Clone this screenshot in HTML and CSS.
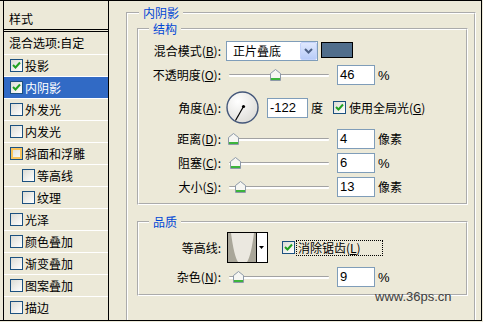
FILE: index.html
```html
<!DOCTYPE html>
<html lang="zh">
<head>
	<meta charset="UTF-8" />
	<title>图层样式 - 内阴影</title>
	<link rel="stylesheet" href="styles.css">
</head>
<body>
	<div class="dialog">
		<div class="styles">
			<div class="styles-head">样式</div>
			<div class="style-row plain">混合选项:自定</div>
			<div class="style-row"><span class="chk"><svg width="11" height="11"><polyline points="2,5 4.5,7.5 9,2.5" /></svg></span>投影</div>
			<div class="style-row selected"><span class="chk"><svg width="11" height="11"><polyline points="2,5 4.5,7.5 9,2.5" /></svg></span>内阴影</div>
			<div class="style-row"><span class="chk"></span>外发光</div>
			<div class="style-row"><span class="chk"></span>内发光</div>
			<div class="style-row"><span class="chk hot"></span>斜面和浮雕</div>
			<div class="style-row sub"><span class="chk"></span>等高线</div>
			<div class="style-row sub"><span class="chk"></span>纹理</div>
			<div class="style-row"><span class="chk"></span>光泽</div>
			<div class="style-row"><span class="chk"></span>颜色叠加</div>
			<div class="style-row"><span class="chk"></span>渐变叠加</div>
			<div class="style-row"><span class="chk"></span>图案叠加</div>
			<div class="style-row"><span class="chk"></span>描边</div>
		</div>

		<div class="effect">
			<fieldset class="group outer">
				<legend>内阴影</legend>

				<fieldset class="group structure">
					<legend>结构</legend>
					<div class="field mode">
						<label class="caption">混合模式(<u>B</u>):</label>
						<div class="select">
							<span>正片叠底</span>
							<span class="drop"><svg width="9" height="6"><polyline points="1,1 4.5,4.5 8,1" /></svg></span>
						</div>
						<span class="swatch"></span>
					</div>
					<div class="field">
						<label class="caption">不透明度(<u>O</u>):</label>
						<div class="slider"><span class="thumb" style="left: 41px"><svg width="11" height="12"><path d="M0.5 4.5 L5.5 0.5 L10.5 4.5 V11.5 H0.5 Z" /><rect x="1" y="9" width="9" height="2" /></svg></span></div>
						<span class="num">46</span>
						<span class="unit latin">%</span>
					</div>
					<div class="field angle">
						<label class="caption">角度(<u>A</u>):</label>
						<svg class="dial" width="33" height="33">
							<defs>
								<radialGradient id="dialFill" cx="0.35" cy="0.3" r="0.8">
									<stop offset="0" stop-color="#ffffff" />
									<stop offset="1" stop-color="#dcdbd6" />
								</radialGradient>
							</defs>
							<circle cx="16.5" cy="16.5" r="15.5" fill="url(#dialFill)" stroke="#44577a" stroke-width="1.4" />
							<line x1="17.5" y1="15.5" x2="9.5" y2="29.5" stroke="#000" stroke-width="1.2" />
							<circle cx="17.5" cy="15.5" r="1.6" fill="#000" />
						</svg>
						<span class="num wide">-122</span>
						<span class="unit">度</span>
						<span class="chk global"><svg width="11" height="11"><polyline points="2,5 4.5,7.5 9,2.5" /></svg></span>
						<span>使用全局光(<u>G</u>)</span>
					</div>
					<div class="field">
						<label class="caption">距离(<u>D</u>):</label>
						<div class="slider"><span class="thumb" style="left: -1px"><svg width="11" height="12"><path d="M0.5 4.5 L5.5 0.5 L10.5 4.5 V11.5 H0.5 Z" /><rect x="1" y="9" width="9" height="2" /></svg></span></div>
						<span class="num">4</span>
						<span class="unit">像素</span>
					</div>
					<div class="field">
						<label class="caption">阻塞(<u>C</u>):</label>
						<div class="slider"><span class="thumb" style="left: 1px"><svg width="11" height="12"><path d="M0.5 4.5 L5.5 0.5 L10.5 4.5 V11.5 H0.5 Z" /><rect x="1" y="9" width="9" height="2" /></svg></span></div>
						<span class="num">6</span>
						<span class="unit latin">%</span>
					</div>
					<div class="field">
						<label class="caption">大小(<u>S</u>):</label>
						<div class="slider"><span class="thumb" style="left: 6px"><svg width="11" height="12"><path d="M0.5 4.5 L5.5 0.5 L10.5 4.5 V11.5 H0.5 Z" /><rect x="1" y="9" width="9" height="2" /></svg></span></div>
						<span class="num">13</span>
						<span class="unit">像素</span>
					</div>
				</fieldset>

				<fieldset class="group quality">
					<legend>品质</legend>
					<div class="field contour-row">
						<label class="caption">等高线:</label>
						<svg class="contour" width="41" height="31">
							<rect x="0.5" y="0.5" width="40" height="30" fill="#fff" stroke="#000" />
							<rect x="1" y="1" width="28" height="29" fill="#ebe8e0" />
							<path d="M1 1 H4 Q7 24 11 30 H1 Z" fill="#a9a699" />
							<path d="M29 1 H27 Q24 24 20 30 H29 Z" fill="#a9a699" />
							<line x1="29.5" y1="1" x2="29.5" y2="30" stroke="#000" />
							<polygon points="32,14 37,14 34.5,17" fill="#000" />
						</svg>
						<span class="chk anti"><svg width="11" height="11"><polyline points="2,5 4.5,7.5 9,2.5" /></svg></span>
						<span class="focus">消除锯齿(<u>L</u>)</span>
					</div>
					<div class="field">
						<label class="caption">杂色(<u>N</u>):</label>
						<div class="slider"><span class="thumb" style="left: 4px"><svg width="11" height="12"><path d="M0.5 4.5 L5.5 0.5 L10.5 4.5 V11.5 H0.5 Z" /><rect x="1" y="9" width="9" height="2" /></svg></span></div>
						<span class="num">9</span>
						<span class="unit latin">%</span>
					</div>
				</fieldset>
			</fieldset>
		</div>

		<div class="watermark">www.36ps.cn</div>
	</div>
</body>
</html>
```

FILE: styles.css
```css
body {
	margin: 0;
	background: #ece9d8;
	font: 12px/20px "Noto Sans CJK SC", sans-serif;
	color: #000;
}

.dialog {
	position: relative;
	display: flex;
	width: 482px;
	height: 321px;
	box-sizing: border-box;
	border: 1px solid #000;
	border-left: 0;
	overflow: hidden;
}

/* style list on the left */
.styles {
	flex: none;
	width: 106px;
	margin-left: 3px;
	box-sizing: border-box;
	border-left: 1px solid #000;
	border-right: 1px solid #000;
}

.styles-head {
	height: 20px;
	padding: 8px 0 0 5px;
	border-bottom: 3px double #000;
}

.style-row {
	display: flex;
	align-items: center;
	height: 21px;
	padding-left: 6px;
	border-top: 1px solid #fff;
}

.style-row.plain {
	height: 22px;
	padding-left: 5px;
	border-top: 0;
}

.style-row.sub {
	padding-left: 18px;
}

.style-row.selected {
	background: #316ac5;
	color: #fff;
}

.chk {
	flex: none;
	display: flex;
	width: 11px;
	height: 11px;
	margin-right: 2px;
	border: 1px solid #1c5180;
	background: linear-gradient(135deg, #dcdcd5, #fff);
}

.chk polyline {
	fill: none;
	stroke: #21a121;
	stroke-width: 2;
}

.chk.hot {
	box-shadow: inset 0 0 0 2px #f9c45c;
}

/* effect panel */
.effect {
	flex: 1;
}

.group {
	margin: 0;
	padding: 0;
	min-width: 0;
	box-sizing: border-box;
	border: 2px groove #fff;
}

.group legend {
	padding: 0 4px;
	margin-left: 10px;
	line-height: 14px;
	color: #0046d5;
}

.outer {
	width: 350px;
	margin: 5px 0 0 17px;
	padding: 0 6px 40px 0;
}

.outer > legend {
	margin-left: 11px;
}

.structure {
	width: 331px;
	margin: 2px 0 0 9px;
	padding-bottom: 6px;
}

.quality {
	width: 331px;
	margin: 10px 0 0 9px;
	padding-bottom: 7px;
}

.field {
	display: flex;
	align-items: center;
	height: 20px;
	margin-top: 4px;
	white-space: nowrap;
}

.field.mode {
	margin-top: 5px;
}

.field.angle {
	height: 33px;
	margin-top: 6px;
}

.field.angle + .field {
	margin-top: 5px;
}

.field.contour-row {
	height: 31px;
	margin-top: 3px;
}

.caption {
	flex: none;
	width: 82px;
	margin-right: 5px;
	text-align: right;
}

.select {
	display: flex;
	align-items: center;
	justify-content: space-between;
	width: 92px;
	height: 20px;
	box-sizing: border-box;
	padding-left: 6px;
	border: 1px solid #7f9db9;
	background: #fff;
}

.drop {
	display: flex;
	align-items: center;
	justify-content: center;
	width: 17px;
	height: 18px;
	box-sizing: border-box;
	border: 1px solid #c4d3fb;
	border-radius: 2px;
	background: linear-gradient(#dfe8fe, #b8ccf8);
}

.drop polyline {
	fill: none;
	stroke: #4d6185;
	stroke-width: 2;
}

.swatch {
	align-self: flex-start;
	width: 32px;
	height: 16px;
	margin: 1px 0 0 3px;
	box-sizing: border-box;
	border: 1px solid #000;
	background: #506e8c;
}

.slider {
	position: relative;
	flex: none;
	width: 100px;
	height: 20px;
	margin-left: 3px;
}

.slider::before {
	content: "";
	position: absolute;
	left: 0;
	right: 0;
	top: 9px;
	height: 3px;
	box-sizing: border-box;
	border-top: 1px solid #a2a2a2;
	border-radius: 1px;
	background: #fff;
}

.thumb {
	position: absolute;
	top: 4px;
	display: flex;
}

.thumb path {
	fill: #f6f6f2;
	stroke: #8d99a8;
}

.thumb rect {
	fill: #3cb43c;
}

.num {
	flex: none;
	width: 38px;
	height: 20px;
	margin-left: 8px;
	padding-left: 2px;
	box-sizing: border-box;
	border: 1px solid #7f9db9;
	background: #fff;
	font: 13px/18px "Liberation Sans", Arial, sans-serif;
}

.num.wide {
	width: 41px;
}

.unit {
	margin-left: 3px;
}

.unit.latin {
	font: 13px "Liberation Sans", Arial, sans-serif;
}

.dial {
	flex: none;
}

.chk.global {
	margin: 0 3px 0 10px;
}

.contour {
	flex: none;
	margin-left: 1px;
}

.chk.anti {
	margin: 0 1px 0 14px;
}

.focus {
	width: 87px;
	height: 16px;
	box-sizing: border-box;
	padding-left: 1px;
	border: 1px dotted #000;
	line-height: 14px;
}

.watermark {
	position: absolute;
	left: 375px;
	top: 288px;
	font: 13px/15px "Liberation Sans", Arial, sans-serif;
	color: #404040;
}
```
